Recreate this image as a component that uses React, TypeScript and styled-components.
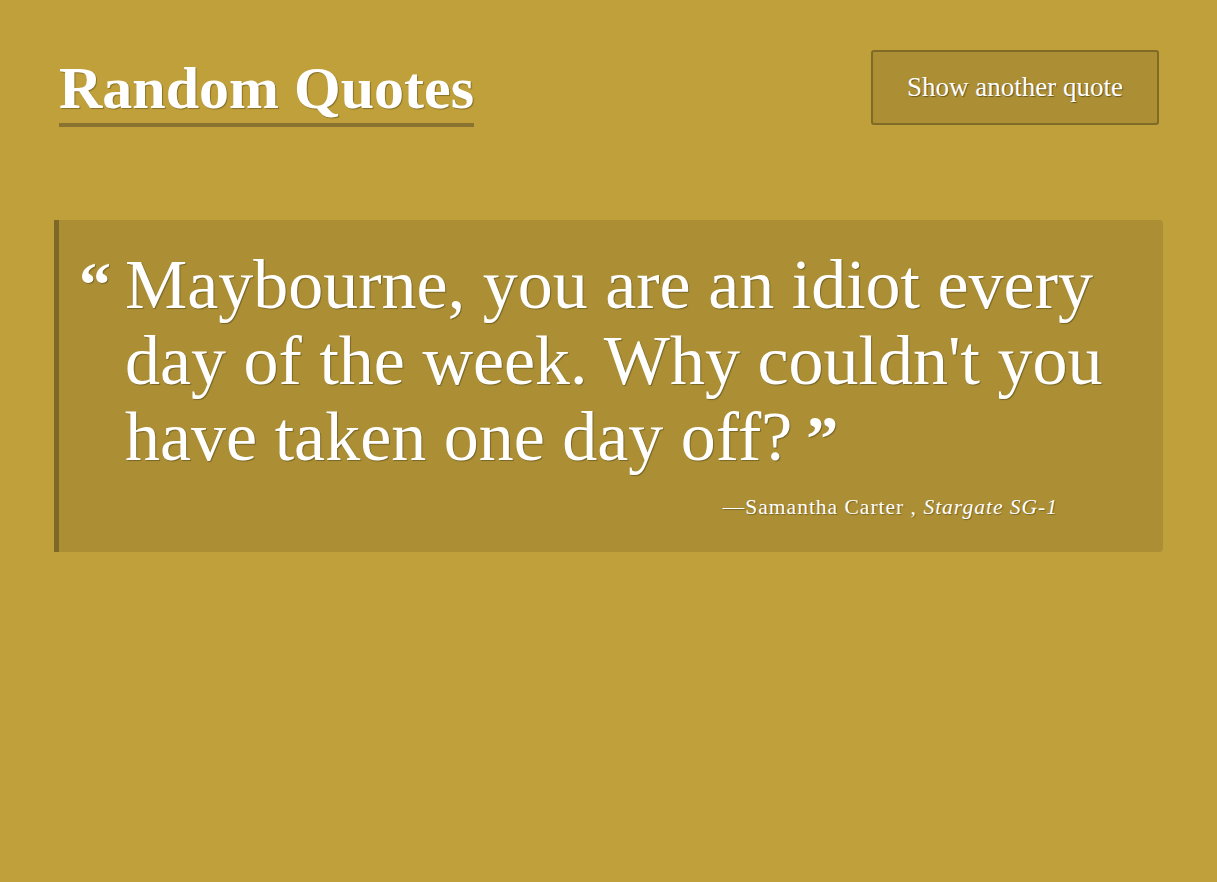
import React from "react";
import styled, { createGlobalStyle } from "styled-components";

const Global = createGlobalStyle`
  html, body { margin: 0; padding: 0; background: #c0a03a; }
  body { font-family: "Liberation Serif", "DejaVu Serif", serif; color: #fff; }
  * { box-sizing: border-box; }
`;

const Page = styled.div`
  min-height: 882px;
  padding: 50px 54px 0 54px;
  background: #c0a03a;
`;

const Header = styled.header`
  display: flex;
  justify-content: space-between;
  align-items: flex-start;
  padding: 0 4px 0 5px;
`;

const Title = styled.h1`
  margin: 0;
  display: inline-block;
  font-size: 60px;
  font-weight: 700;
  line-height: 70px;
  padding-top: 3px;
  border-bottom: 4px solid #8a7230;
  text-shadow: 1px 1px 1px rgba(0, 0, 0, 0.3);
`;

const Button = styled.button`
  width: 288px;
  height: 75px;
  background: rgba(0, 0, 0, 0.1);
  border: 2px solid #7f6a26;
  border-radius: 3px;
  color: #fff;
  font-family: "Liberation Serif", "DejaVu Serif", serif;
  font-size: 27px;
  text-shadow: 1px 1px 1px rgba(0, 0, 0, 0.4);
  cursor: pointer;
`;

const Quote = styled.blockquote`
  margin: 93px 0 0 0;
  background: rgba(0, 0, 0, 0.1);
  border-left: 5px solid #7d6827;
  border-radius: 0 4px 4px 0;
  padding: 27px 30px 32px 20px;
  display: flex;
  flex-direction: column;
`;

const QuoteBody = styled.div`
  display: flex;
  align-items: flex-start;
  gap: 14px;
`;

const Mark = styled.span`
  font-size: 64px;
  line-height: 1;
  font-weight: 700;
  padding-top: 6px;
  text-shadow: 1px 1px 1px rgba(0, 0, 0, 0.3);
`;

const Text = styled.p`
  margin: 0;
  flex: 1;
  font-size: 70px;
  line-height: 76px;
  text-shadow: 1px 1px 1px rgba(0, 0, 0, 0.3);
`;

const Close = styled.span`
  display: inline-block;
  font-weight: 700;
  font-size: 64px;
  vertical-align: top;
  line-height: 1;
  margin-left: 14px;
  transform: translateY(8px);
`;

const Cite = styled.footer`
  align-self: flex-end;
  margin: 20px 75px 0 0;
  font-size: 21.5px;
  letter-spacing: 1px;
  text-shadow: 1px 1px 1px rgba(0, 0, 0, 0.3);
  em { font-style: italic; }
`;

export default function App() {
  return (
    <>
      <Global />
      <Page>
        <Header>
          <Title>Random Quotes</Title>
          <Button>Show another quote</Button>
        </Header>
        <Quote>
          <QuoteBody>
            <Mark>“</Mark>
            <Text>
              Maybourne, you are an idiot every day of the week. Why couldn't you have taken one day off?
              <Close>”</Close>
            </Text>
          </QuoteBody>
          <Cite>
            —Samantha Carter , <em>Stargate SG-1</em>
          </Cite>
        </Quote>
      </Page>
    </>
  );
}
